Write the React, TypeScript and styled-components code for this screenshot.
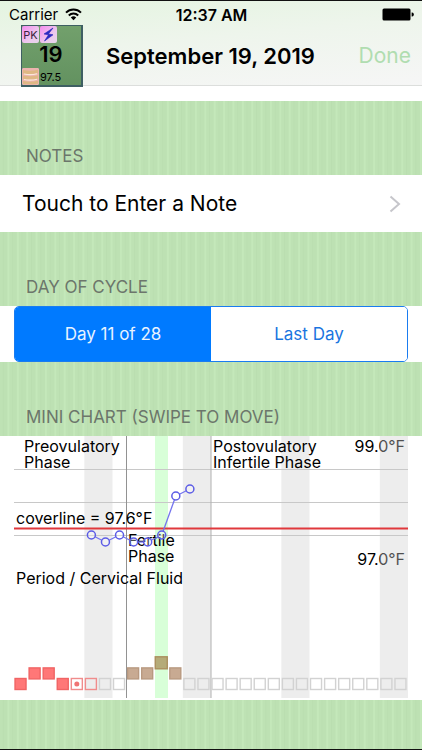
import React, { useState } from "react";
import styled, { createGlobalStyle } from "styled-components";

const GlobalStyle = createGlobalStyle`
  * { box-sizing: border-box; }
  body {
    margin: 0;
    background: #fff;
    color: #000;
    font-family: Inter, "Liberation Sans", sans-serif;
  }
  button { font: inherit; margin: 0; cursor: pointer; }
`;

const Screen = styled.main`
  display: flex;
  flex-direction: column;
  min-height: 100vh;
  border-top: 1px solid #111;
  border-bottom: 1px solid #111;
`;

const Header = styled.header`
  border-bottom: 1px solid #dcdedc;
  background: linear-gradient(175deg, #e4f4e0 0%, #eef5ec 45%, #f6f6f6 100%);
`;

const StatusBar = styled.div`
  display: grid;
  grid-template-columns: 1fr auto 1fr;
  align-items: center;
  height: 24px;
  padding: 3px 8px 0 9px;
  font-size: 15px;
  line-height: 20px;
`;

const Carrier = styled.span`
  display: flex;
  align-items: center;
  gap: 7px;
`;

const Clock = styled.time`
  font-size: 16px;
  font-weight: 600;
`;

const Battery = styled.svg`
  justify-self: end;
`;

const NavBar = styled.div`
  display: grid;
  grid-template-columns: 85px 1fr auto;
  align-items: center;
  height: 60px;
  padding: 0 11px 0 21px;
`;

const Title = styled.h1`
  margin: 0;
  font-size: 22px;
  line-height: 28px;
  font-weight: 600;
  white-space: nowrap;
`;

const DoneButton = styled.button`
  padding: 0;
  border: 0;
  background: none;
  color: #b0ddb0;
  font-size: 21px;
  line-height: 28px;
`;

const DayTile = styled.div`
  display: grid;
  grid-template-rows: 17px 1fr 17px;
  width: 62px;
  height: 62px;
  border: 1px solid #3e5f63;
  border-right-width: 2px;
  border-bottom-width: 2px;
  background: linear-gradient(#72a06c, #639260);
`;

const TileRow = styled.div`
  display: flex;
  align-items: center;
  gap: 1px;
  font-size: 11px;
  line-height: 16px;
`;

const Tag = styled.span`
  display: flex;
  align-items: center;
  justify-content: center;
  width: 17px;
  height: 17px;
  border-radius: 2px;
  background: linear-gradient(135deg, #f58cf0, #ecc8ee 60%, #e6d5e8);
  color: #3a2340;
`;

const DayNumber = styled.strong`
  padding-right: 1px;
  text-align: center;
  font-size: 22px;
  line-height: 22px;
  font-weight: 600;
`;

const Spacer = styled.div`
  height: 15px;
`;

const Stripes = styled.div<{ $grow?: boolean }>`
  flex: ${(p) => (p.$grow ? "1 0 auto" : "none")};
  background-color: #bce0b1;
  background-image: linear-gradient(
    90deg,
    #bee2b4 0 28%,
    #badeb0 28% 40%,
    #bde1b3 40% 76%,
    #c4e8ba 76% 100%
  );
  background-size: calc(100% / 45) 100%;
`;

const SectionTitle = styled.h2`
  margin: 0;
  padding: 45px 26px 8px;
  color: #6c766b;
  font-size: 17px;
  line-height: 21px;
  font-weight: 400;
`;

const NoteRow = styled.button`
  display: flex;
  align-items: center;
  justify-content: space-between;
  width: 100%;
  height: 57px;
  padding: 0 21px 0 22px;
  border: 0;
  background: #fff;
  color: #000;
  font-size: 21px;
  line-height: 28px;
  text-align: left;
`;

const SegmentRow = styled.div`
  padding: 0 14px;
  background: #fff;
`;

const Segments = styled.div`
  display: grid;
  grid-template-columns: 1fr 1fr;
  height: 56px;
  border: 1px solid #1a7cf0;
  border-radius: 5px;
  overflow: hidden;
`;

const Segment = styled.button<{ $active: boolean }>`
  padding: 0;
  border: 0;
  background: ${(p) => (p.$active ? "#007aff" : "#fff")};
  color: ${(p) => (p.$active ? "#e8f3ff" : "#1a75e0")};
  font-size: 17px;
  line-height: 22px;
`;

const ChartPanel = styled.div`
  padding: 0 14px 2px;
  background: #fff;
`;

const Chart = styled.svg`
  display: block;
  width: 100%;
  height: auto;
  font-size: 16px;
`;

const COL = 394 / 28;
const center = (i: number) => (i + 0.5) * COL;

const weekends = [5, 12, 19, 26];
const temps: [number, number][] = [
  [5, 99], [6, 106], [7, 99], [8, 106], [9, 106], [10, 99], [11, 60], [12, 53],
];

type Mark = { level: number; fill: string; stroke: string; dot?: boolean };
const red = { fill: "#ff7777", stroke: "#f06464" };
const tan = { fill: "#c8aa92", stroke: "#b89980" };
const special: Record<number, Mark> = {
  0: { level: 0, ...red },
  1: { level: 1, ...red },
  2: { level: 1, ...red },
  3: { level: 0, ...red },
  4: { level: 0, fill: "#fff", stroke: "#f08c8c", dot: true },
  5: { level: 0, fill: "none", stroke: "#f08c8c" },
  8: { level: 1, ...tan },
  9: { level: 1, ...tan },
  10: { level: 2, fill: "#b5ab78", stroke: "#ab8f5e" },
  11: { level: 1, ...tan },
};
const marks: Mark[] = Array.from(
  { length: 28 },
  (_, i) => special[i] ?? { level: 0, fill: "none", stroke: "#d2d2d2" },
);

function MiniChart() {
  return (
    <Chart viewBox="0 0 394 262" role="img" aria-label="Mini chart">
      <text x="391" y="16" textAnchor="end">99.0°F</text>
      <text x="391" y="129" textAnchor="end">97.0°F</text>
      {weekends.map((i) => (
        <rect key={i} x={i * COL} y="0" width={COL * 2} height="262" fill="#d0d0d0" opacity="0.385" />
      ))}
      <rect x="141" y="0" width="13" height="262" fill="#d8ffd8" />
      {[33.5, 66.5, 99.5].map((y) => (
        <line key={y} x1="0" x2="394" y1={y} y2={y} stroke="#c8c8c8" />
      ))}
      <line x1="112.5" x2="112.5" y1="0" y2="262" stroke="#929292" />
      <line x1="197" x2="197" y1="0" y2="262" stroke="#b0b0b0" />
      <line x1="0" x2="394" y1="92.5" y2="92.5" stroke="#e0383c" strokeWidth="2" />
      <text x="10" y="16">Preovulatory</text>
      <text x="10" y="32">Phase</text>
      <text x="199" y="16">Postovulatory</text>
      <text x="199" y="32">Infertile Phase</text>
      <text x="2" y="88">coverline = 97.6°F</text>
      <text x="114" y="110">Fertile</text>
      <text x="114" y="126">Phase</text>
      <text x="2" y="148">Period / Cervical Fluid</text>
      {temps.slice(1).map(([i, y], n) => {
        const [pi, py] = temps[n];
        const dx = center(i) - center(pi);
        const dy = y - py;
        const k = 4 / Math.hypot(dx, dy);
        return (
          <line
            key={i}
            x1={center(pi) + dx * k}
            y1={py + dy * k}
            x2={center(i) - dx * k}
            y2={y - dy * k}
            stroke="#7474ee"
            strokeWidth="1.3"
          />
        );
      })}
      {temps.map(([i, y]) => (
        <circle key={i} cx={center(i)} cy={y} r="4" fill="#fff" fillOpacity="0.3" stroke="#5c5ce6" strokeWidth="1.5" />
      ))}
      {marks.map((m, i) => {
        const size = m.level === 2 ? 12 : 11;
        const cy = 248 - m.level * 10.6;
        return (
          <g key={i}>
            <rect
              x={center(i) - size / 2 - 0.5}
              y={cy - size / 2}
              width={size}
              height={size}
              fill={m.fill}
              stroke={m.stroke}
              strokeWidth="1.4"
            />
            {m.dot && <circle cx={center(i) - 0.5} cy={cy} r="2.5" fill="#f07474" />}
          </g>
        );
      })}
    </Chart>
  );
}

export default function App() {
  const [segment, setSegment] = useState(0);
  return (
    <>
      <GlobalStyle />
      <Screen>
        <Header>
          <StatusBar>
            <Carrier>
              Carrier
              <svg width="17" height="13" viewBox="0 0 17 13" aria-label="Wi-Fi">
                <path d="M1 4.6a10.6 10.6 0 0 1 15 0" fill="none" stroke="#000" strokeWidth="2" />
                <path d="M3.8 7.5a6.7 6.7 0 0 1 9.4 0" fill="none" stroke="#000" strokeWidth="2" />
                <path d="M5.8 9.5a3.8 3.8 0 0 1 5.4 0L8.5 12.3z" />
              </svg>
            </Carrier>
            <Clock>12:37 AM</Clock>
            <Battery width="32" height="13" viewBox="0 0 32 13" aria-label="Battery full">
              <rect x="0.5" y="0.5" width="28" height="12" rx="1.5" />
              <path d="M29.6 4.6h0.6a1.6 1.9 0 0 1 0 3.8h-0.6z" />
            </Battery>
          </StatusBar>
          <NavBar>
            <DayTile>
              <TileRow>
                <Tag>PK</Tag>
                <Tag>
                  <svg width="13" height="15" viewBox="0 0 13 15" aria-hidden="true">
                    <path d="M11 1 2 7l4.500.8L2.500 14l8.500-6.200-4.600-.9z" fill="#2a2ac4" stroke="#2424b8" strokeWidth="0.6" />
                  </svg>
                </Tag>
              </TileRow>
              <DayNumber>19</DayNumber>
              <TileRow>
                <Tag>
                  <svg width="17" height="17" viewBox="0 0 17 17" aria-hidden="true">
                    <rect width="17" height="17" rx="2" fill="#ecb4ae" />
                    <path d="M1 2q8 1.500 15-.3v3.500q-8 1.500-15 .2zM1 7.500q8 1.500 15-.3v3.500q-8 1.500-15 .2zM1 13q8 1.500 15-.3v3q-8 1.200-15 .2z" fill="#dfb884" />
                    <path d="M2 6q7 1.500 13-.3M2 11.500q7 1.500 13-.3" fill="none" stroke="#fbe9da" strokeWidth="1.200" />
                  </svg>
                </Tag>
                97.5
              </TileRow>
            </DayTile>
            <Title>September 19, 2019</Title>
            <DoneButton type="button">Done</DoneButton>
          </NavBar>
        </Header>
        <Spacer />
        <Stripes>
          <SectionTitle>NOTES</SectionTitle>
        </Stripes>
        <NoteRow type="button">
          Touch to Enter a Note
          <svg width="12" height="18" viewBox="0 0 12 18" aria-hidden="true">
            <path d="M1.500 1.500 10 9l-8.500 7.500" fill="none" stroke="#c6c6cb" strokeWidth="2" />
          </svg>
        </NoteRow>
        <Stripes>
          <SectionTitle>DAY OF CYCLE</SectionTitle>
        </Stripes>
        <SegmentRow>
          <Segments>
            {["Day 11 of 28", "Last Day"].map((label, i) => (
              <Segment
                key={label}
                type="button"
                $active={segment === i}
                aria-pressed={segment === i}
                onClick={() => setSegment(i)}
              >
                {label}
              </Segment>
            ))}
          </Segments>
        </SegmentRow>
        <Stripes>
          <SectionTitle>MINI CHART (SWIPE TO MOVE)</SectionTitle>
        </Stripes>
        <ChartPanel>
          <MiniChart />
        </ChartPanel>
        <Stripes $grow />
      </Screen>
    </>
  );
}
